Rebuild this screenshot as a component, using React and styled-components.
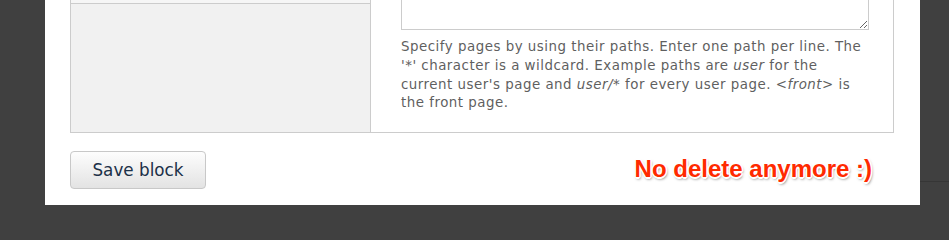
import React from "react";
import styled, { createGlobalStyle } from "styled-components";

const Global = createGlobalStyle`
  html, body { margin: 0; padding: 0; }
  body {
    background: #404040;
    font-family: "DejaVu Sans", Verdana, sans-serif;
  }
`;

const Page = styled.div`
  width: 949px;
  height: 224px;
  background:
    linear-gradient(#363636, #363636) no-repeat right 0 top 181px / 29px 1px,
    #404040;
  overflow: hidden;
`;

const Dialog = styled.div`
  margin-left: 45px;
  width: 875px;
  height: 205px;
  background: #fff;
  box-sizing: border-box;
  padding: 0 26px 0 25px;
  display: flex;
  flex-direction: column;
`;

const Fieldset = styled.div`
  display: grid;
  grid-template-columns: 300px 1fr;
  height: 133px;
  box-sizing: border-box;
  border: 1px solid #cccccc;
  border-top: none;
`;

const TabColumn = styled.div`
  background: #f1f1f1;
  border-right: 1px solid #cccccc;
`;

const TabItem = styled.div`
  height: 3px;
  border-bottom: 1px solid #cccccc;
  background: #f6f6f6;
`;

const Pane = styled.div`
  padding-left: 30px;
  display: flex;
  flex-direction: column;
`;

const Area = styled.textarea`
  display: block;
  width: 468px;
  height: 30px;
  box-sizing: border-box;
  border: 1px solid #cccccc;
  border-top: none;
  border-radius: 0;
  margin: 0;
  padding: 0;
  background: #fff;
  resize: vertical;
  outline: none;
`;

const Description = styled.div`
  margin-top: 8px;
  font-size: 13.4px;
  letter-spacing: 0.5px;
  line-height: 18.8px;
  color: #5f5f5f;
  white-space: nowrap;

  em {
    font-style: italic;
  }
`;

const Actions = styled.div`
  display: flex;
  align-items: center;
  justify-content: space-between;
  margin-top: 18px;
  padding-right: 22px;
`;

const Button = styled.button`
  width: 136px;
  height: 38px;
  box-sizing: border-box;
  border: 1px solid #c8c8c8;
  border-radius: 4px;
  background: linear-gradient(#fdfdfd, #e3e3e3);
  color: #1b3048;
  font-family: "DejaVu Sans", Verdana, sans-serif;
  font-size: 16.8px;
  padding: 0;
  cursor: pointer;
`;

const Note = styled.div`
  font-family: "Liberation Sans", Arial, sans-serif;
  font-weight: bold;
  font-size: 24px;
  color: #ff2a00;
  margin-bottom: 2px;
  text-shadow:
    -1.5px 0 0 #fff, 1.5px 0 0 #fff, 0 -1.5px 0 #fff, 0 1.5px 0 #fff,
    -1px -1px 0 #fff, 1px -1px 0 #fff, -1px 1px 0 #fff, 1px 1px 0 #fff,
    1px 2px 3px rgba(0, 0, 0, 0.6);
`;

export default function App() {
  return (
    <>
      <Global />
      <Page>
        <Dialog>
          <Fieldset>
            <TabColumn>
              <TabItem />
            </TabColumn>
            <Pane>
              <Area defaultValue="" />
              <Description>
                Specify pages by using their paths. Enter one path per line. The
                <br />
                '*' character is a wildcard. Example paths are <em>user</em> for the
                <br />
                current user's page and <em>user/*</em> for every user page.{" "}
                <em>&lt;front&gt;</em> is
                <br />
                the front page.
              </Description>
            </Pane>
          </Fieldset>
          <Actions>
            <Button>Save block</Button>
            <Note>No delete anymore :)</Note>
          </Actions>
        </Dialog>
      </Page>
    </>
  );
}
